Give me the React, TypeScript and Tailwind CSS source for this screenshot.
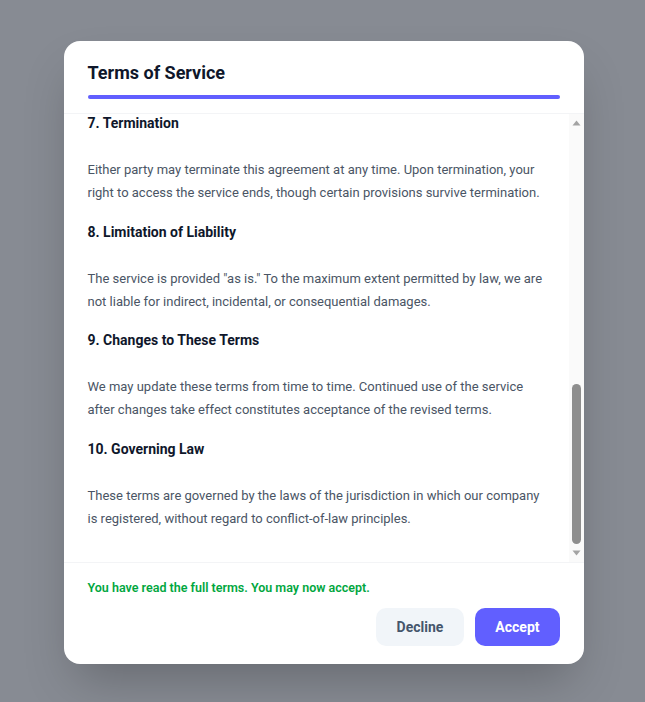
import React, { useLayoutEffect, useRef } from "react";

const sections = [
  {
    title: "1. Acceptance of Terms",
    body: "By accessing or using the service, you agree to be bound by these terms. If you do not agree to all of the terms, you may not access or use the service in any way.",
  },
  {
    title: "2. Use of the Service",
    body: "You agree to use the service only for lawful purposes and in accordance with these terms. You are responsible for all activity that occurs under your account.",
  },
  {
    title: "3. Accounts",
    body: "You must provide accurate and complete information when creating an account. You are responsible for safeguarding your password and any actions taken with it.",
  },
  {
    title: "4. Intellectual Property",
    body: "The service and its original content, features, and functionality are and will remain the exclusive property of our company and its licensors.",
  },
  {
    title: "5. Privacy",
    body: "Your use of the service is also governed by our Privacy Policy, which describes how we collect, use, and share information about you when you use the service.",
  },
  {
    title: "6. Fees and Payment",
    body: "Certain features may require payment. All fees are non-refundable except as required by law or as expressly stated otherwise in these terms.",
  },
  {
    title: "7. Termination",
    body: "Either party may terminate this agreement at any time. Upon termination, your right to access the service ends, though certain provisions survive termination.",
  },
  {
    title: "8. Limitation of Liability",
    body: 'The service is provided "as is." To the maximum extent permitted by law, we are not liable for indirect, incidental, or consequential damages.',
  },
  {
    title: "9. Changes to These Terms",
    body: "We may update these terms from time to time. Continued use of the service after changes take effect constitutes acceptance of the revised terms.",
  },
  {
    title: "10. Governing Law",
    body: "These terms are governed by the laws of the jurisdiction in which our company is registered, without regard to conflict-of-law principles.",
  },
];

export default function App() {
  const ref = useRef<HTMLDivElement>(null);
  useLayoutEffect(() => {
    if (ref.current) ref.current.scrollTop = ref.current.scrollHeight;
  }, []);

  return (
    <div className="w-full h-screen bg-gray-900/50 flex items-center justify-center [font-family:Roboto,sans-serif]">
      <div className="w-[520px] h-[623px] mt-[3px] ml-[2px] bg-white rounded-2xl shadow-2xl flex flex-col overflow-hidden">
        <div className="px-6 pt-[18px] pb-[14px] border-b border-gray-100">
          <h2 className="text-lg leading-7 font-bold text-slate-900">Terms of Service</h2>
          <div className="mt-2 h-1 w-full rounded-full bg-gray-100">
            <div className="h-1 w-full rounded-full bg-indigo-500" />
          </div>
        </div>

        <div className="relative flex-1 min-h-0">
          <div
            ref={ref}
            className="h-full overflow-y-auto [scrollbar-width:none] pl-6 pr-[39px] pt-6 pb-8"
          >
            <div className="flex flex-col gap-[16.5px]">
              {sections.map((s) => (
                <section key={s.title}>
                  <h3 className="text-sm leading-[22px] font-bold text-slate-900 mb-6">{s.title}</h3>
                  <p className="text-[13px] leading-[23px] text-gray-600">{s.body}</p>
                </section>
              ))}
            </div>
          </div>

          <div className="absolute right-0 top-0 bottom-0 w-[15px] bg-[#fafafa]">
            <svg className="absolute left-[3px] top-[6px]" width="9" height="6" viewBox="0 0 9 6">
              <path d="M4.5 0.5 L8.5 5.5 L0.5 5.5 Z" fill="#a3a3a3" />
            </svg>
            <div className="absolute left-[3px] top-[270px] h-[160px] w-[9px] rounded-full bg-[#8e8e8e]" />
            <svg className="absolute left-[3px] bottom-[6px]" width="9" height="6" viewBox="0 0 9 6">
              <path d="M0.5 0.5 L8.5 0.5 L4.5 5.5 Z" fill="#a3a3a3" />
            </svg>
          </div>
        </div>

        <div className="border-t border-gray-100 px-6 pt-[17px] pb-[18px]">
          <p className="text-[12.5px] leading-4 font-semibold text-green-600">
            You have read the full terms. You may now accept.
          </p>
          <div className="mt-3 flex justify-end gap-[11px]">
            <button className="h-[38px] px-[21px] rounded-[10px] bg-slate-100 text-sm font-bold text-slate-600">
              Decline
            </button>
            <button className="h-[38px] px-5 rounded-[10px] bg-indigo-500 text-sm font-bold text-white">
              Accept
            </button>
          </div>
        </div>
      </div>
    </div>
  );
}
